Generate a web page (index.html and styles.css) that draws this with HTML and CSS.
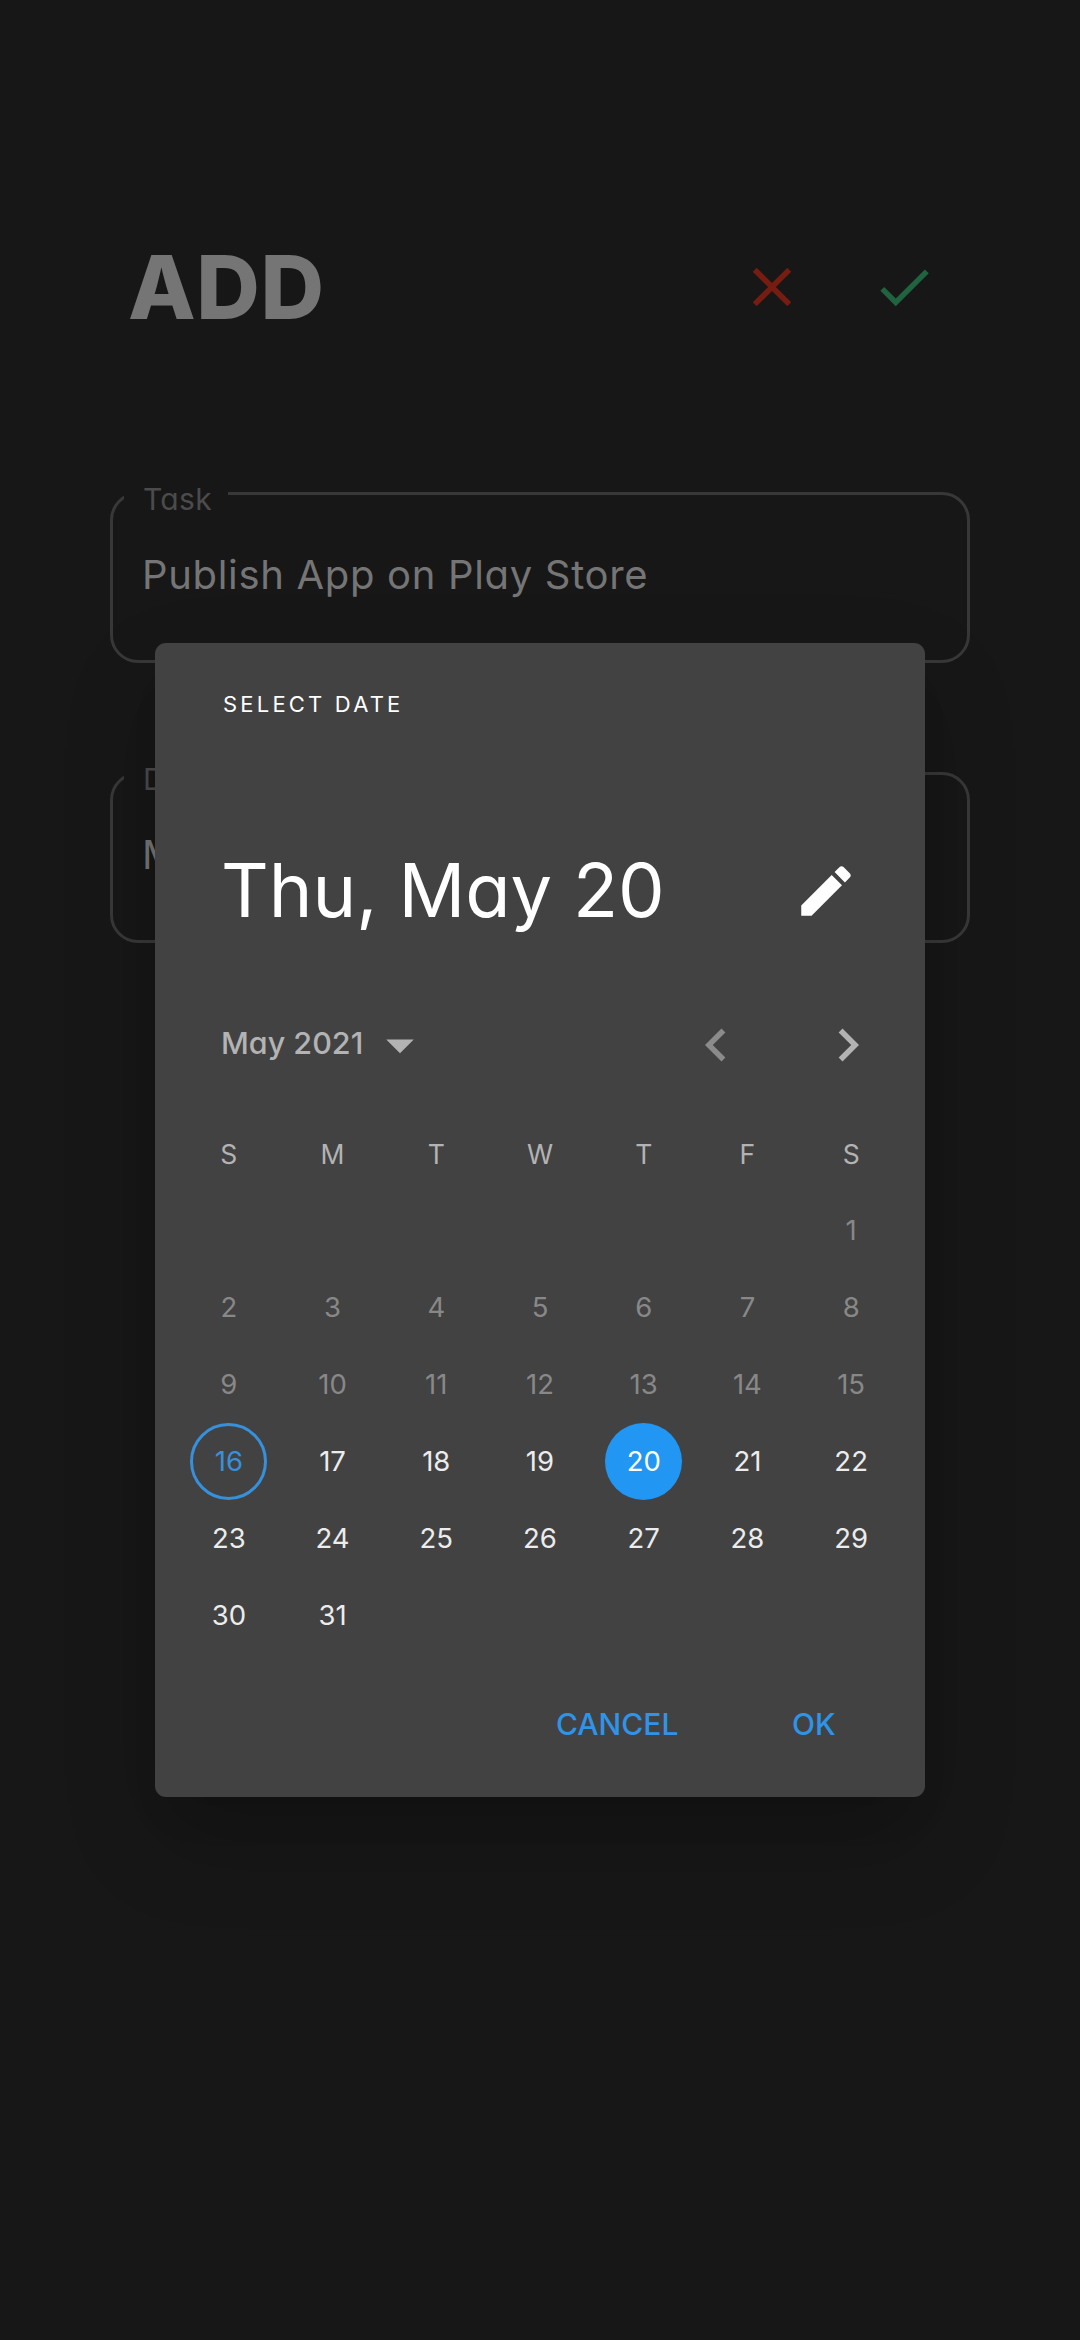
FILE: index.html
```
<!DOCTYPE html>
<html lang="en">
<head>
<meta charset="utf-8">
<title>Add task</title>
<link rel="stylesheet" href="styles.css">
</head>
<body>
<main class="page">
  <header class="header">
    <h1 class="title">ADD</h1>
    <div class="actions">
      <svg class="icon discard" viewBox="0 0 24 24"><path d="M19 6.41L17.59 5 12 10.59 6.41 5 5 6.41 10.59 12 5 17.59 6.41 19 12 13.41 17.59 19 19 17.59 13.41 12z"/></svg>
      <svg class="icon save" viewBox="0 0 24 24"><path d="M9 16.2L4.8 12l-1.4 1.4L9 19 21 7l-1.4-1.4L9 16.2z"/></svg>
    </div>
  </header>
  <section class="field">
    <span class="label">Task</span>
    <span class="value">Publish App on Play Store</span>
  </section>
  <section class="field">
    <span class="label">D</span>
    <span class="value">M</span>
  </section>
</main>

<div class="dialog">
  <div class="caption">SELECT DATE</div>
  <div class="selected">
    <span class="date">Thu, May 20</span>
    <svg class="icon" viewBox="0 0 24 24"><path d="M3 17.25V21h3.75L17.81 9.94l-3.75-3.75L3 17.25zM20.71 7.04c.39-.39.39-1.02 0-1.41l-2.34-2.34c-.39-.39-1.02-.39-1.41 0l-1.83 1.83 3.75 3.75 1.83-1.83z"/></svg>
  </div>
  <div class="monthbar">
    <span class="month">May 2021</span>
    <svg class="icon drop" viewBox="0 0 24 24"><path d="M7 10l5 5 5-5z"/></svg>
    <svg class="icon prev" viewBox="0 0 24 24"><path d="M15.41 7.41L14 6l-6 6 6 6 1.41-1.41L10.83 12z"/></svg>
    <svg class="icon next" viewBox="0 0 24 24"><path d="M10 6L8.59 7.41 13.17 12l-4.58 4.59L10 18l6-6z"/></svg>
  </div>
  <div class="calendar">
    <span class="wd">S</span><span class="wd">M</span><span class="wd">T</span><span class="wd">W</span><span class="wd">T</span><span class="wd">F</span><span class="wd">S</span>
    <span class="past first">1</span>
    <span class="past">2</span><span class="past">3</span><span class="past">4</span><span class="past">5</span><span class="past">6</span><span class="past">7</span><span class="past">8</span>
    <span class="past">9</span><span class="past">10</span><span class="past">11</span><span class="past">12</span><span class="past">13</span><span class="past">14</span><span class="past">15</span>
    <span class="today">16</span><span>17</span><span>18</span><span>19</span><span class="picked">20</span><span>21</span><span>22</span>
    <span>23</span><span>24</span><span>25</span><span>26</span><span>27</span><span>28</span><span>29</span>
    <span>30</span><span>31</span>
  </div>
  <div class="buttons"><span class="cancel">CANCEL</span><span class="ok">OK</span></div>
</div>
</body>
</html>
```
FILE: styles.css
```
* { box-sizing: border-box; }
body {
  margin: 0;
  width: 1080px;
  height: 2340px;
  overflow: hidden;
  position: relative;
  background: #171717;
  font-family: Inter, "Open Sans", sans-serif;
  font-feature-settings: "cv11";
  white-space: nowrap;
}
.page { padding: 237px 110px 0; }
.header {
  height: 100px;
  margin-bottom: 155px;
  padding: 0 33px 0 18px;
  display: flex;
  align-items: center;
  justify-content: space-between;
}
.title {
  margin: 0;
  font-size: 88px;
  line-height: 100px;
  font-weight: 800;
  color: #757575;
  letter-spacing: 0.6px;
}
.icon { width: 66px; height: 66px; flex: none; display: block; fill: currentColor; }
.actions { display: flex; gap: 66px; }
.discard { color: #761c10; }
.save { color: #20633f; }
.field {
  height: 171px;
  margin-bottom: 109px;
  border: 3px solid #383838;
  border-radius: 28px;
}
.label {
  display: block;
  width: 104px;
  height: 36px;
  margin: -14px 0 0 11px;
  padding-left: 19px;
  background: #171717;
  color: #4b4b4b;
  font-size: 30px;
  line-height: 36px;
  letter-spacing: 0.3px;
}
.value {
  display: block;
  margin: 33px 0 0 29px;
  line-height: 50px;
  font-size: 40px;
  letter-spacing: 0.68px;
  color: #757575;
}
.dialog {
  position: absolute;
  left: 155px;
  top: 643px;
  width: 770px;
  height: 1154px;
  border-radius: 11px;
  background: #424242;
  color: #fff;
  box-shadow: 0 30px 42px -20px rgba(0,0,0,.1), 0 42px 96px -2px rgba(0,0,0,.2);
}
.caption { padding: 46px 0 0 68px; font-size: 22px; line-height: 30px; letter-spacing: 3.2px; }
.selected {
  margin-top: 122px;
  height: 100px;
  padding: 0 66px 0 66px;
  display: flex;
  align-items: center;
  justify-content: space-between;
}
.date { font-size: 74px; line-height: 98px; height: 100px; }
.monthbar {
  margin-top: 71px;
  height: 66px;
  padding: 0 44px 0 66px;
  display: flex;
  align-items: center;
  color: #b3b3b3;
}
.month { width: 146px; height: 66px; font-size: 30.5px; font-weight: 500; line-height: 62px; }
.prev { margin-left: auto; color: #8b8b8b; }
.next { margin-left: 66px; }
.calendar {
  margin: 37px 22px 0;
  display: grid;
  grid-template-columns: repeat(7, 1fr);
  grid-auto-rows: 77px;
  justify-items: center;
  font-size: 27.5px;
  line-height: 77px;
  color: #ececec;
}
.calendar span { width: 77px; text-align: center; }
.calendar .wd { color: #b3b3b3; font-size: 26.5px; line-height: 79px; }
.calendar .past { color: #888; }
.calendar .first { grid-column: 7; }
.calendar .today { border: 3px solid #3790dc; border-radius: 50%; color: #3790dc; line-height: 71px; }
.calendar .picked { background: #2196f3; border-radius: 50%; color: #fff; }
.buttons {
  margin-top: 48px;
  padding-left: 401px;
  display: flex;
  font-size: 30px;
  line-height: 44px;
  font-weight: 500;
  color: #2f93e8;
}
.cancel { width: 236px; }
```
